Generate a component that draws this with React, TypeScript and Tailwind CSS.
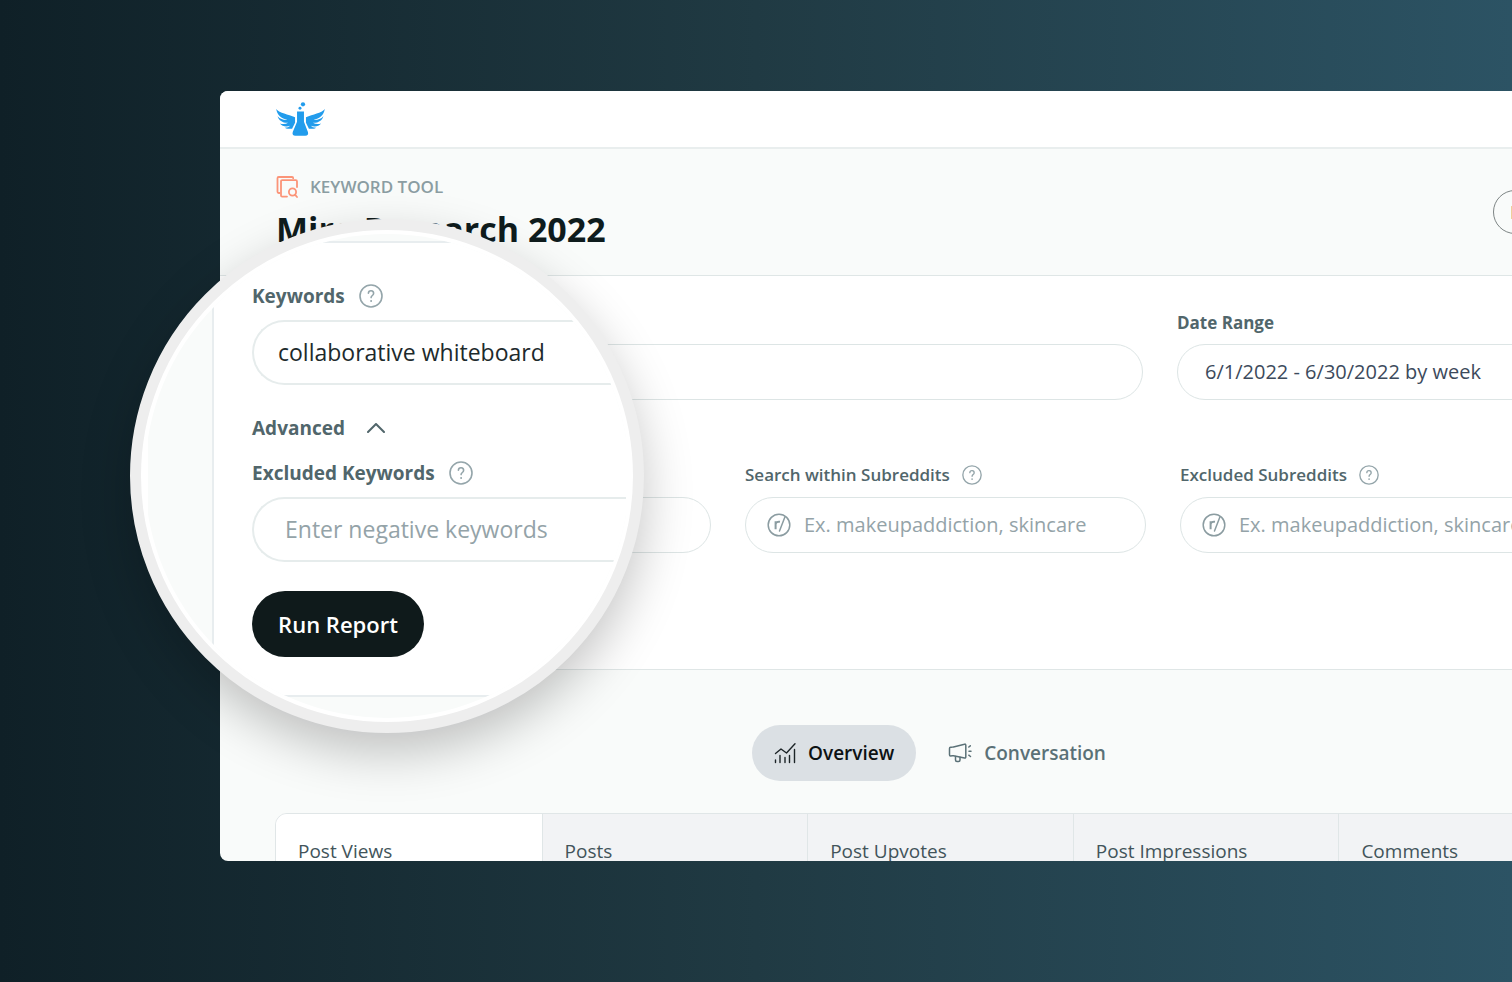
import React from "react";

const inputBase =
  "min-w-0 flex-1 bg-transparent text-xl outline-none placeholder:text-[#94a3a8] placeholder:opacity-100";

function HelpIcon({ className }: { className: string }) {
  return (
    <svg viewBox="0 0 24 24" fill="none" stroke="#94a5aa" strokeWidth="1.6" strokeLinecap="round" strokeLinejoin="round" className={className} aria-hidden="true">
      <circle cx="12" cy="12" r="11" />
      <path d="M9.4 9.2a2.6 2.6 0 0 1 5.2.3c0 1.9-2.500 2.100-2.500 4.100" />
      <path d="M12.100 16.900v.2" strokeWidth="2" />
    </svg>
  );
}

function Wing() {
  return (
    <path d="M34 42C44 56 70 57 91 67V84L82 102H68Q64 102 60 99C68 99 73 97 76 93C64 97 52 95 45 86C54 89 63 88 70 84C54 85 42 77 38 64C46 73 57 76 68 75C50 71 36 60 34 42Z" />
  );
}

function Logo() {
  return (
    <svg viewBox="34 21 147 103" fill="#229cec" className="h-[34px] w-[49px]" aria-label="Home">
      <circle cx="115" cy="28" r="6.5" />
      <circle cx="106" cy="40" r="4.5" />
      <path d="M97 50h21v31l12 31q3 11-8 11H92q-11 0-8-11l13-31z" />
      <Wing />
      <g transform="translate(215 0) scale(-1 1)">
        <Wing />
      </g>
    </svg>
  );
}

function KeywordIcon() {
  return (
    <svg viewBox="0 0 22 22" fill="none" stroke="#fb9478" strokeWidth="1.8" strokeLinecap="round" strokeLinejoin="round" className="size-[22px]" aria-hidden="true">
      <path d="M3.500 17H2.700Q1.500 17 1.500 15.800V2.200Q1.500 1 2.700 1H16Q17.200 1 17.200 2.200" />
      <path d="M11 20.600H6.200Q5 20.600 5 19.400V5.400Q5 4.200 6.200 4.200H19.800Q21 4.200 21 5.400V11" />
      <circle cx="16.500" cy="16" r="3.600" />
      <path d="M19 18.700l2 2.300" />
    </svg>
  );
}

function SubredditIcon() {
  return (
    <svg viewBox="0 0 24 24" fill="none" stroke="#8b9ca1" strokeWidth="1.500" strokeLinecap="round" className="size-6 shrink-0" aria-hidden="true">
      <circle cx="12" cy="12" r="10.800" />
      <path d="M8.600 16.200V8.200M8.600 11.400c.3-2.200 2-3 4.400-2.600" strokeWidth="2" strokeLinecap="butt" />
      <path d="M12.500 18L17.800 4.200" />
    </svg>
  );
}

function ChartIcon() {
  return (
    <svg viewBox="0 0 22 22" fill="none" stroke="#1c2427" strokeWidth="1.400" strokeLinecap="round" strokeLinejoin="round" className="size-[22px]" aria-hidden="true">
      <path d="M1.500 11.500L7 7l5.500 4L21 1.800" />
      <path d="M1.500 18v2.500M6 13.500v7M11 15.500v5M15.500 13.500v7M20.500 7.500v13" />
    </svg>
  );
}

function MegaphoneIcon() {
  return (
    <svg viewBox="0 0 24 22" fill="none" stroke="#5b7177" strokeWidth="1.500" strokeLinecap="round" strokeLinejoin="round" className="h-[22px] w-6" aria-hidden="true">
      <path d="M2.500 5.200Q4 5.500 5.500 4.900L16.500 2.200Q17.800 1.800 17.800 3.200V14.800Q17.800 16.300 16.500 16L5.500 13.800Q4 13.500 2.500 14Q1.500 14 1.500 12.800V6.500Q1.500 5.200 2.500 5.200Z" />
      <path d="M7.500 14.400V18Q7.500 19.500 9 19.500H10.500Q12 19.500 12 18V15.300" />
      <path d="M20.800 5l1.500-1.200M21 9.200h2M20.800 13.200l1.700 1.300" />
    </svg>
  );
}

function SubredditField({ id, label }: { id: string; label: string }) {
  return (
    <div className="w-[401px] shrink-0">
      <div className="flex h-5 items-center gap-3">
        <label htmlFor={id} className="text-[17px] font-semibold">{label}</label>
        <HelpIcon className="size-5" />
      </div>
      <div className="mt-3 flex h-14 items-center gap-[13px] rounded-full border border-[#dde5e5] px-[21px]">
        <SubredditIcon />
        <input id={id} className={inputBase} placeholder="Ex. makeupaddiction, skincare" />
      </div>
    </div>
  );
}

function ReportWindow() {
  const stats = ["Post Views", "Posts", "Post Upvotes", "Post Impressions", "Comments"];
  return (
    <section className="min-h-0 w-[calc(100%+148px)] flex-1 overflow-hidden rounded-lg bg-[#f9fbfa]">
      <header className="flex h-[58px] items-center border-b-2 border-[#e9eeee] bg-white px-14">
        <a href="#home"><Logo /></a>
      </header>

      <div className="flex items-start justify-between px-14 pt-[27px] pb-6">
        <div>
          <div className="flex items-center gap-3">
            <KeywordIcon />
            <span className="text-[17px] leading-[22px] font-semibold text-[#8b9da2]">KEYWORD TOOL</span>
          </div>
          <h1 className="mt-[9px] text-[34px] leading-[44px] font-bold text-[#0f1c1d]">Miro Research 2022</h1>
        </div>
        <button className="mt-3.5 h-11 w-[111px] rounded-full border border-[#7d8484] pl-4 text-left text-lg text-[#5b6263]">Export</button>
      </div>

      <form className="h-[395px] border-y border-[#dfe6e6] bg-white px-14 pt-[35px] text-[#51666b]">
        <div className="flex gap-[34px]">
          <div className="flex-1 pt-[33px]">
            <div className="flex h-14 items-center rounded-full border border-[#dde5e5] px-[27px]">
              <input aria-label="Report keywords" className={inputBase} />
            </div>
          </div>
          <div className="w-[427px]">
            <label htmlFor="date-range" className="block h-6 text-[17px] leading-6 font-bold">Date Range</label>
            <div className="mt-[9px] flex h-14 items-center rounded-full border border-[#dde5e5] px-[27px] text-[#3c4a5c]">
              <input id="date-range" className={inputBase} defaultValue="6/1/2022 - 6/30/2022 by week" />
            </div>
          </div>
        </div>
        <div className="mt-[65px] flex gap-[34px] pr-[23px]">
          <div className="flex-1 pt-8">
            <div className="flex h-14 items-center rounded-full border border-[#dde5e5] px-[27px]">
              <input aria-label="Report excluded keywords" className={inputBase} />
            </div>
          </div>
          <SubredditField id="search-subreddits" label="Search within Subreddits" />
          <SubredditField id="excluded-subreddits" label="Excluded Subreddits" />
        </div>
      </form>

      <nav className="mt-[55px] flex justify-center text-[19px] font-semibold text-[#5b7177]">
        <button className="flex h-14 items-center gap-3 rounded-full bg-[#dbe0e4] px-[22px] text-[#0d1213]">
          <ChartIcon />
          Overview
        </button>
        <button className="flex h-14 items-center gap-3 pr-[22px] pl-8">
          <MegaphoneIcon />
          Conversation
        </button>
      </nav>

      <div className="mx-[55px] mt-8 grid grid-cols-5 overflow-hidden rounded-t-xl border border-[#e0e6e7] bg-[#f2f3f5] text-[19px] text-[#42545a]">
        {stats.map((name, i) => (
          <button
            key={name}
            className={
              i === 0
                ? "flex h-32 bg-white px-[22px] pt-[23px] leading-7"
                : "flex h-32 border-l border-[#e0e6e7] px-[22px] pt-[23px] leading-7"
            }
          >
            {name}
          </button>
        ))}
      </div>
    </section>
  );
}

function Lens() {
  return (
    <aside className="absolute top-[219px] left-[130px] size-[514px] rounded-full border-[11px] border-[#eeeeee] bg-white p-1 shadow-[0_20px_50px_rgba(0,0,0,0.23)]">
      <div className="size-full overflow-hidden rounded-full px-[3px]">
        <div className="h-full bg-[#f9fbfa] pt-[7px] pb-[21px] pl-16">
          <form className="h-full border-2 border-r-0 border-[#e8edef] bg-white pt-[41px] pl-[38px] text-[#51666b]">
            <div className="flex h-6 items-center gap-3.5">
              <label htmlFor="keywords" className="text-[19px] font-bold">Keywords</label>
              <HelpIcon className="size-6" />
            </div>
            <div className="mt-3 flex h-[65px] items-center rounded-l-full border-2 border-r-0 border-[#e6ecec] pl-6 text-[#1d2a2c]">
              <input id="keywords" className="w-full bg-transparent text-[23px] outline-none" defaultValue="collaborative whiteboard" />
            </div>
            <button type="button" className="mt-[29px] flex h-7 items-center gap-[22px] text-[19px] font-bold">
              Advanced
              <svg viewBox="0 0 18 10" fill="none" stroke="currentColor" strokeWidth="2" strokeLinecap="round" strokeLinejoin="round" className="h-2.5 w-[18px]" aria-hidden="true">
                <path d="M1 9l8-8 8 8" />
              </svg>
            </button>
            <div className="mt-[19px] flex h-6 items-center gap-3.5">
              <label htmlFor="excluded" className="text-[19px] font-bold">Excluded Keywords</label>
              <HelpIcon className="size-6" />
            </div>
            <div className="mt-3 flex h-[65px] items-center rounded-l-full border-2 border-r-0 border-[#e6ecec] pl-[31px]">
              <input id="excluded" className="w-full bg-transparent text-[23px] outline-none placeholder:text-[#94a3a8] placeholder:opacity-100" placeholder="Enter negative keywords" />
            </div>
            <button type="button" className="mt-[29px] h-[66px] w-[172px] rounded-full bg-[#0f1a1b] text-[22px] font-semibold text-white">Run Report</button>
          </form>
        </div>
      </div>
    </aside>
  );
}

export default function App() {
  return (
    <main className="relative flex h-screen flex-col overflow-hidden bg-[linear-gradient(90deg,#0f2027,#203a43,#2c5364)] pt-[91px] pb-[121px] pl-[220px] font-['Open_Sans',sans-serif]">
      <ReportWindow />
      <Lens />
    </main>
  );
}
